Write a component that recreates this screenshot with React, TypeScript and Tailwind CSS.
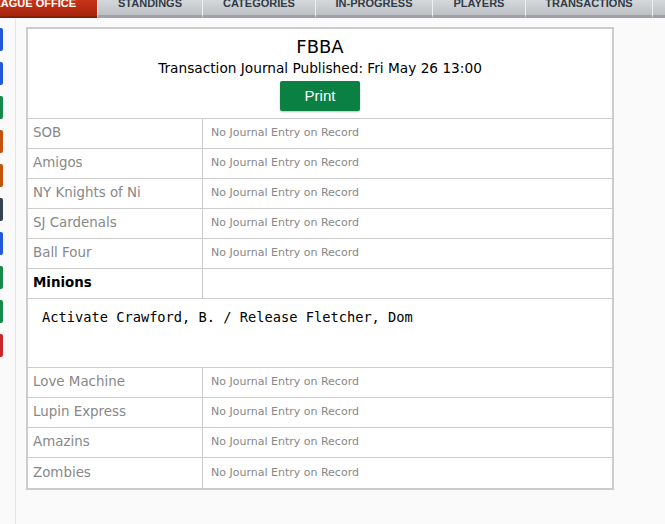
import React from "react";

const tabs = [
  { label: "STANDINGS", w: "w-[105px]" },
  { label: "CATEGORIES", w: "w-[113px]" },
  { label: "IN-PROGRESS", w: "w-[117px]" },
  { label: "PLAYERS", w: "w-[93px]" },
  { label: "TRANSACTIONS", w: "w-[127px]" },
];

const chips = [
  "bg-[#2357dc]",
  "bg-[#2357dc]",
  "bg-[#17894a]",
  "bg-[#c2540f]",
  "bg-[#c2540f]",
  "bg-[#364152]",
  "bg-[#2357dc]",
  "bg-[#17894a]",
  "bg-[#17894a]",
  "bg-[#c6282b]",
];

const teamsTop = ["SOB", "Amigos", "NY Knights of Ni", "SJ Cardenals", "Ball Four"];
const teamsBottom = ["Love Machine", "Lupin Express", "Amazins", "Zombies"];

const TeamRow = ({ name, last }: { name: string; last?: boolean }) => (
  <div className={`flex h-[30px] ${last ? "" : "border-b border-[#cccccc]"}`}>
    <div className="w-[175px] shrink-0 border-r border-[#cccccc] pl-[5px] flex items-center text-[13.4px] text-[#888888]">
      {name}
    </div>
    <div className="pl-[8px] flex items-center text-[11px] text-[#888888]">No Journal Entry on Record</div>
  </div>
);

export default function App() {
  return (
    <div className="w-[665px] h-[524px] overflow-hidden bg-[#fafafa] font-['DejaVu_Sans',sans-serif]">
      {/* tab bar */}
      <div className="flex h-[18px] overflow-hidden font-['Liberation_Sans',Arial,sans-serif] text-[11px] font-bold leading-[11px]">
        <div className="w-[97px] shrink-0 flex justify-end pr-[21px] bg-gradient-to-b from-[#c8341a] to-[#a5230c] border-b-[2px] border-[#8a1c0a] text-white whitespace-nowrap">
          <span className="-mt-[2px]">LEAGUE OFFICE</span>
        </div>
        {tabs.map((t) => (
          <div
            key={t.label}
            className={`${t.w} shrink-0 flex justify-center border-l border-[#eef0f2] bg-gradient-to-b from-[#d5d8db] to-[#bcc0c4] border-b-[3px] border-b-[#9ea2a6] text-[#2f3b46] whitespace-nowrap`}
          >
            <span className="-mt-[2px]">{t.label}</span>
          </div>
        ))}
        <div className="flex-1 border-l border-[#eef0f2] bg-gradient-to-b from-[#d5d8db] to-[#bcc0c4] border-b-[3px] border-b-[#9ea2a6]" />
      </div>

      <div className="flex">
        {/* left rail */}
        <div className="w-[16px] h-[506px] shrink-0 border-r border-[#e6e6e6] flex flex-col gap-[11px] pt-[10px]">
          {chips.map((c, i) => (
            <div key={i} className={`w-[3px] h-[23px] rounded-r-[2px] ${c}`} />
          ))}
        </div>

        <div className="pl-[10px] pt-[9px]">
          <div className="w-[588px] bg-white border-2 border-[#cccccc]">
            <div className="h-[90px] border-b border-[#cccccc] flex flex-col items-center pt-[5px]">
              <div className="text-[18px] leading-[26px] text-black">FBBA</div>
              <div className="text-[13.7px] leading-[16px] text-black">Transaction Journal Published: Fri May 26 13:00</div>
              <button className="mt-[5px] w-[80px] h-[30px] rounded-[2px] bg-[#0b8043] text-white text-[15px] font-['Liberation_Sans',Arial,sans-serif] shadow-[0_1px_2px_rgba(0,0,0,0.25)]">
                Print
              </button>
            </div>

            {teamsTop.map((t) => (
              <TeamRow key={t} name={t} />
            ))}

            <div className="flex h-[30px] border-b border-[#cccccc]">
              <div className="w-[175px] shrink-0 border-r border-[#cccccc] pl-[5px] flex items-center text-[13.4px] font-bold text-black">
                Minions
              </div>
            </div>
            <div className="h-[69px] border-b border-[#cccccc] pl-[14px] pt-[9px] font-['DejaVu_Sans_Mono',monospace] text-[13.7px] leading-[18px] text-black whitespace-pre">
              Activate Crawford, B. / Release Fletcher, Dom
            </div>

            {teamsBottom.map((t, i) => (
              <TeamRow key={t} name={t} last={i === teamsBottom.length - 1} />
            ))}
          </div>
        </div>
      </div>
    </div>
  );
}
